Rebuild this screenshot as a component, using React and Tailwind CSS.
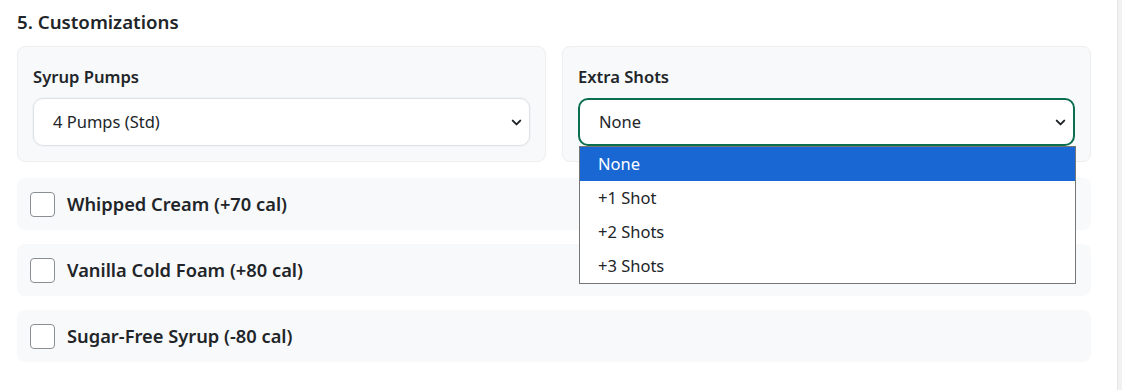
import React from "react";
import { ChevronDown } from "lucide-react";

const font = { fontFamily: '"Noto Sans", "Open Sans", sans-serif' };

const SelectBox = ({ value, focused }) => (
  <div
    className={`flex items-center justify-between h-[48px] bg-white rounded-[10px] pl-[19px] pr-[5px] text-[16.5px] text-[#212529] ${
      focused ? "border-2 border-[#0b6e4f]" : "border border-[#dee2e6] shadow-[0_0_0_1px_#f1f3f5]"
    }`}
  >
    <span>{value}</span>
    <ChevronDown className="w-[15px] h-[15px] text-[#212529]" strokeWidth={3.2} />
  </div>
);

const App = () => {
  const extras = [
    "Whipped Cream (+70 cal)",
    "Vanilla Cold Foam (+80 cal)",
    "Sugar-Free Syrup (-80 cal)",
  ];
  const shots = ["None", "+1 Shot", "+2 Shots", "+3 Shots"];

  return (
    <div className="flex w-[1122px] h-[390px] bg-white overflow-hidden" style={font}>
      <div className="w-[1074px] ml-[17px] pt-[9px]">
        {/* Heading */}
        <h2 className="text-[18.7px] font-semibold text-[#212529] leading-[26px] mb-[11px]">
          5. Customizations
        </h2>

        {/* Selects */}
        <div className="grid grid-cols-2 gap-[16px]">
          <div className="bg-[#f8f9fa] border border-[#eceef0] rounded-[8px] px-[15px] pt-[18px] pb-[15px]">
            <div className="text-[16.6px] font-semibold text-[#212529] leading-[24px] mb-[9px]">Syrup Pumps</div>
            <SelectBox value="4 Pumps (Std)" />
          </div>
          <div className="relative bg-[#f8f9fa] border border-[#eceef0] rounded-[8px] px-[15px] pt-[18px] pb-[15px]">
            <div className="text-[16.6px] font-semibold text-[#212529] leading-[24px] mb-[9px]">Extra Shots</div>
            <SelectBox value="None" focused />
            {/* Open dropdown list */}
            <div className="absolute left-[16px] top-[99px] w-[497px] bg-white border border-[#767676] z-10">
              {shots.map((s, i) => (
                <div
                  key={s}
                  className={`h-[34px] flex items-center pl-[18px] text-[16.5px] ${
                    i === 0 ? "bg-[#1967d2] text-white" : "text-[#212529]"
                  }`}
                >
                  {s}
                </div>
              ))}
            </div>
          </div>
        </div>

        {/* Checkbox rows */}
        <div className="flex flex-col gap-[14px] mt-[16px]">
          {extras.map((e) => (
            <div key={e} className="flex items-center h-[52px] bg-[#f8f9fa] rounded-[8px] pl-[13px]">
              <div className="w-[25px] h-[25px] bg-white border border-[#8a8f94] rounded-[4px]" />
              <span className="ml-[12px] text-[18.3px] font-semibold text-[#212529]">{e}</span>
            </div>
          ))}
        </div>
      </div>

      {/* Scrollbar track */}
      <div className="ml-auto w-[5px] h-full bg-[#f1f1f1] border-l border-[#e6e6e6]" />
    </div>
  );
};

export default App;
